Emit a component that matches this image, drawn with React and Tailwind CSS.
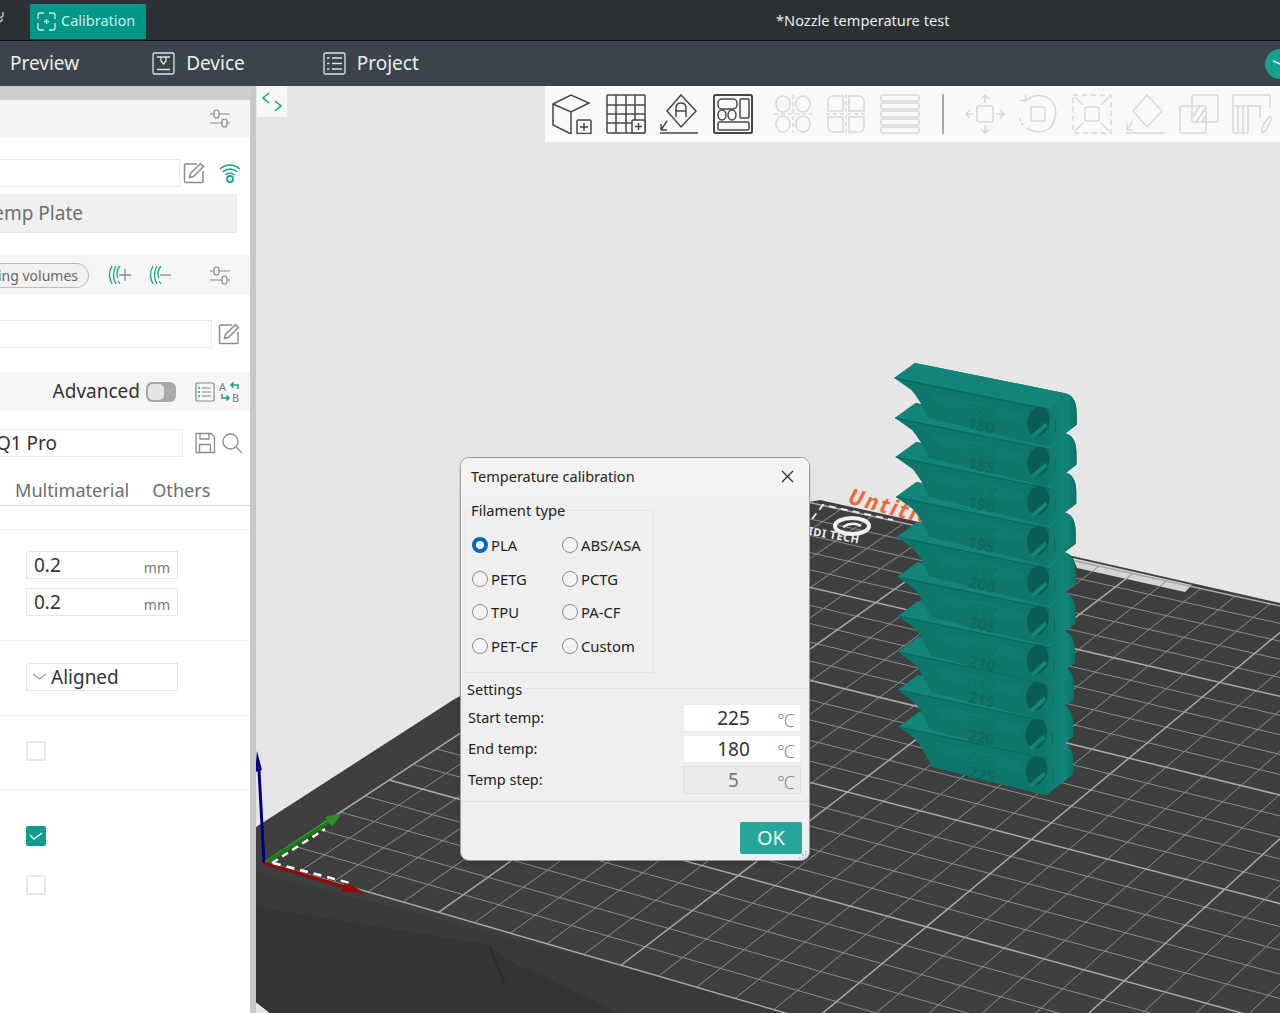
import React from 'react';

const SANS = { fontFamily: '"Noto Sans", "Open Sans", sans-serif' };

// perspective of the print bed: s runs along the front edge, t along the left edge
const OX = 265, OY = 862;
const G = -0.00494, H = 0.00721;
const VSX = -6585, VSY = -1125, VTX = 3832, VTY = -1492;
function project(s, t) {
  const d = 1 + G * s + H * t;
  return [(OX + G * s * VSX + H * t * VTX) / d, (OY + G * s * VSY + H * t * VTY) / d];
}

const TIP = [[894.3, 378], [895, 418], [895.7, 457], [896, 497], [897, 537], [897.5, 577], [898, 616], [898, 652], [898, 690], [899, 727]];
const LABELS = ['180', '185', '190', '195', '200', '205', '210', '215', '220', '225'];

function Tier({ x, y, k, label }) {
  return (
    <g transform={`translate(${x} ${y}) scale(${k} 1)`}>
      <path d="M0 0 L20.7 -15 L172 15.5 C180 18 182.4 26 182.4 36 L182.4 46.7 L153.7 68.4 L33.7 39.7 Q26 22 17 12 Z" fill="#0e766b" />
      <path d="M0 0 L20.7 -15 L172 15.5 L155.7 31.7 Z" fill="#12847a" />
      <path d="M0 0 L155.7 31.7" stroke="#0a655b" strokeWidth="1" fill="none" />
      <path d="M34 14 L130 34 L128 46 L46 28 Z" fill="#107c70" opacity="0.7" />
      <path d="M155.7 31.7 L172 15.5 C180 18 182.4 26 182.4 36 L182.4 46.7 L153.7 68.4 Z" fill="url(#cap)" />
      <ellipse cx="144" cy="43.4" rx="11" ry="15" transform="rotate(12 144 43.4)" fill="#0a5d54" />
      <path d="M138 59 L152.4 46.3" stroke="#128679" strokeWidth="4" fill="none" />
      <path d="M161 42 L161 54" stroke="#0c6a60" strokeWidth="1" fill="none" />
      <text transform="translate(70 32) rotate(13) skewX(-22)" fontSize="15" fontStyle="italic" fill="#0e7165" style={SANS}>orca</text>
      <text transform="translate(72 50) rotate(13)" fontSize="16" fontWeight="700" fill="#0c6c61" style={SANS}>{label}</text>
    </g>
  );
}

function Scene() {
  const minor = [];
  const major = [];
  for (let s = 0; s <= 45; s++) {
    const a = project(s, 0), b = project(s, 25);
    (s % 5 === 0 ? major : minor).push(`M${a[0]} ${a[1]}L${b[0]} ${b[1]}`);
  }
  for (let t = 0; t <= 25; t++) {
    const a = project(0, t), b = project(45, t);
    (t % 5 === 0 ? major : minor).push(`M${a[0]} ${a[1]}L${b[0]} ${b[1]}`);
  }
  return (
    <svg className="block w-full h-full" viewBox="256 86 1024 927">
      <defs>
        <clipPath id="bed"><path d="M256 827 L453 700 L809 502 L820 500 L1068 555 L1280 603 L1280 1013 L256 1013 Z" /></clipPath>
        <linearGradient id="cap" x1="0" y1="0" x2="1" y2="0">
          <stop offset="0" stopColor="#0f7a6e" />
          <stop offset="0.7" stopColor="#11857a" />
          <stop offset="1" stopColor="#0d7066" />
        </linearGradient>
      </defs>
      <path d="M256 827 L453 700 L809 502 L820 500 L1068 555 L1280 603 L1280 1013 L270 1013 L256 1002 Z" fill="#3e3f3f" />
      <path d="M256 872 L800 1013 L270 1013 L256 1002 Z" fill="#3a3a3a" />
      <path d="M256 907 L490 945 L507 960 L620 1013 L270 1013 L256 1002 Z" fill="#343434" />
      <path d="M490 947 L505 985" stroke="#2b2b2b" strokeWidth="2" fill="none" />
      <g clipPath="url(#bed)" fill="none">
        <path d="M1073 558 L1192 585 L1185 592 L1077 568 Z" fill="#d4d4d4" stroke="none" />
        <path d={minor.join('')} stroke="#8c8c8c" strokeWidth="1" />
        <path d={major.join('')} stroke="#a9a9a9" strokeWidth="1.5" />
        <path d="M812 519 L823 505 L893 520" stroke="#e8e8e8" strokeWidth="2" strokeDasharray="7 5" />
      </g>
      <text transform="translate(847 503) rotate(15)" fontSize="22" fontWeight="700" fontStyle="italic" letterSpacing="2" fill="#f0693a" style={SANS}>Untitled</text>
      <g fill="none" stroke="#f2f2f2">
        <ellipse cx="852" cy="526" rx="17" ry="8" strokeWidth="4" />
        <path d="M843 527 Q852 521 861 526" strokeWidth="2.5" />
      </g>
      <text transform="translate(799 533) rotate(10)" fontSize="11" fontWeight="700" letterSpacing="0.5" fill="#ededed" style={SANS}>QIDI TECH</text>

      {/* tower, bottom tier first */}
      {TIP.map((p, i) => 9 - i).map((i) => (
        <Tier key={i} x={TIP[i][0]} y={TIP[i][1]} k={1 - i * 0.005} label={LABELS[i]} />
      ))}

      {/* axes */}
      <path d="M264 863 L259 770" stroke="#00007f" strokeWidth="3" fill="none" />
      <path d="M257 751 L262 770 L255 772 Z" fill="#00007f" />
      <path d="M267 862 L330 821" stroke="#0a850a" strokeWidth="3.5" fill="none" />
      <path d="M342 813 L325 817 L332 827 Z" fill="#2f8a2f" />
      <path d="M272 863 L325 829" stroke="#ffffff" strokeWidth="2.5" strokeDasharray="7 5" fill="none" />
      <path d="M264 863 L345 887" stroke="#8b0f0f" strokeWidth="3.5" fill="none" />
      <path d="M365 893 L345 881 L341 892 Z" fill="#8b0f0f" />
      <path d="M273 863 L350 883" stroke="#ffffff" strokeWidth="2.5" strokeDasharray="8 6" fill="none" />
    </svg>
  );
}

function Sliders() {
  return (
    <svg width="22" height="22" viewBox="0 0 22 22" fill="none" stroke="#8a8a8a" strokeWidth="1.2">
      <path d="M1 7H5M10 7H21M1 16H13M18 16H21" />
      <rect x="5" y="3" width="5" height="8" rx="2.5" />
      <rect x="13" y="12" width="5" height="8" rx="2.5" />
    </svg>
  );
}

function EditIcon() {
  return (
    <svg width="22" height="22" viewBox="0 0 22 22" fill="none" stroke="#8c8c8c" strokeWidth="1.5">
      <path d="M14 2H2.5Q1.5 2 1.5 3V19.5Q1.5 20.5 2.5 20.5H19Q20 20.5 20 19.5V9" />
      <path d="M6.5 15.5L7.5 11.5L17.5 1.5L20.5 4.5L10.5 14.5Z" />
    </svg>
  );
}

function Wifi() {
  return (
    <svg width="22" height="22" viewBox="0 0 22 22" fill="none" stroke="#1aa08f" strokeWidth="1.4">
      <path d="M1 7Q11 -1 21 7M3.5 10Q11 4 18.5 10M6.5 13Q11 9 15.5 13" />
      <circle cx="11" cy="17" r="3" strokeWidth="1.8" />
    </svg>
  );
}

function Filament({ minus }) {
  return (
    <svg width="24" height="22" viewBox="0 0 24 22" fill="none" strokeWidth="1.3">
      <path d="M4 2Q-1 11 4 20M8 2Q3 11 8 20" stroke="#1aa08f" />
      <path d="M12 2Q7 8 10 14M10 17L12 20" stroke="#1aa08f" />
      <path d={minus ? 'M11 11H22' : 'M11 11H23M17 5V17'} stroke="#8a8a8a" />
    </svg>
  );
}

function ParamList() {
  return (
    <svg width="20" height="20" viewBox="0 0 20 20" fill="none" stroke="#7d8a88" strokeWidth="1.2">
      <rect x="1" y="1" width="18" height="18" rx="1" />
      <path d="M7 6H16M7 10H16M7 14H16" />
      <path d="M3 6H5M3 10H5M3 14H5" stroke="#1aa08f" strokeWidth="1.6" />
    </svg>
  );
}

function Compare() {
  return (
    <svg width="22" height="22" viewBox="0 0 22 22" fill="none">
      <text x="0" y="10" fontSize="11" fill="#7f7f7f" style={SANS}>A</text>
      <text x="13" y="21" fontSize="11" fill="#7f7f7f" style={SANS}>B</text>
      <path d="M19 8V4H12M14.5 1.5L12 4L14.5 6.5" stroke="#1aa08f" strokeWidth="1.6" />
      <path d="M3 13V17H10M7.5 14.5L10 17L7.5 19.5" stroke="#1aa08f" strokeWidth="1.6" />
    </svg>
  );
}

function SaveIcon() {
  return (
    <svg width="22" height="22" viewBox="0 0 22 22" fill="none" stroke="#8c8c8c" strokeWidth="1.3">
      <path d="M2 1.5H17L20.5 5V20.5H2Z" />
      <path d="M6 1.5V7H15V1.5M5.5 20.5V12.5H16.5V20.5" />
    </svg>
  );
}

function SearchIcon() {
  return (
    <svg width="22" height="22" viewBox="0 0 22 22" fill="none" stroke="#8c8c8c" strokeWidth="1.3">
      <circle cx="9.5" cy="9.5" r="7.5" />
      <path d="M15 15L21 21" />
    </svg>
  );
}

function NumberField({ value }) {
  return (
    <div className="w-[152px] h-[28px] ml-[26px] flex items-center justify-between pl-[7px] pr-[7px] border border-[#e6e6e6] bg-white">
      <span className="text-[19px] text-[#333]">{value}</span>
      <span className="text-[14px] text-[#777] mt-1">mm</span>
    </div>
  );
}

function Check({ on }) {
  if (on) {
    return (
      <div className="w-[20px] h-[20px] ml-[26px] rounded-[2px] bg-[#109c8a] flex items-center justify-center">
        <svg width="14" height="10" viewBox="0 0 14 10" fill="none" stroke="#e8fff9" strokeWidth="1.4"><path d="M1 4L5 8L13 2" /></svg>
      </div>
    );
  }
  return <div className="w-[20px] h-[20px] ml-[26px] rounded-[2px] border-2 border-[#e6e6e6] bg-white" />;
}

function Sidebar() {
  return (
    <div className="w-[250px] shrink-0 bg-white flex flex-col overflow-hidden" style={SANS}>
      <div className="h-[14px] bg-[#cfcfcf] shrink-0" />
      <div className="h-[38px] shrink-0 bg-[#f5f5f5] flex items-center justify-end pr-[19px] pb-[2px]"><Sliders /></div>

      <div className="h-[28px] mt-[21px] shrink-0 flex items-center">
        <div className="w-[180px] h-full border-y border-r border-[#ececec]" />
        <div className="ml-[3px]"><EditIcon /></div>
        <div className="ml-[14px]"><Wifi /></div>
      </div>
      <div className="w-[237px] h-[39px] mt-[7px] shrink-0 bg-[#efefef] border-b border-r border-[#e6e6e6] flex items-center justify-end pr-[153px] overflow-hidden whitespace-nowrap text-[19px] text-[#6e6e6e]">Low Temp Plate</div>

      <div className="h-[40px] mt-[22px] shrink-0 bg-[#f6f6f6] flex items-center">
        <div className="w-[89px] h-[25px] rounded-r-full border border-l-0 border-[#bdbdbd] bg-[#f1f1f1] flex items-center justify-end pr-[10px] overflow-hidden whitespace-nowrap text-[14px] text-[#666]">Flushing volumes</div>
        <div className="ml-[19px]"><Filament /></div>
        <div className="ml-[17px]"><Filament minus /></div>
        <div className="ml-[36px]"><Sliders /></div>
      </div>

      <div className="h-[28px] mt-[25px] shrink-0 flex items-center">
        <div className="w-[212px] h-full border-y border-r border-[#ececec]" />
        <div className="ml-[6px]"><EditIcon /></div>
      </div>

      <div className="h-[39px] mt-[24px] shrink-0 bg-[#f6f6f6] flex items-center justify-end">
        <span className="text-[19px] text-[#333]">Advanced</span>
        <div className="ml-[6px] w-[30px] h-[20px] rounded-[6px] bg-[#a9a9a9] p-[2px] pr-[12px]"><div className="w-full h-full rounded-[5px] bg-[#e4e4e4]" /></div>
        <div className="ml-[19px]"><ParamList /></div>
        <div className="ml-[4px] mr-[9px]"><Compare /></div>
      </div>

      <div className="h-[28px] mt-[18px] shrink-0 flex items-center">
        <div className="w-[183px] h-full border-y border-r border-[#ececec] flex items-center justify-end pr-[125px] overflow-hidden whitespace-nowrap text-[19px] text-[#333]">Qidi Q1 Pro</div>
        <div className="ml-[11px]"><SaveIcon /></div>
        <div className="ml-[5px]"><SearchIcon /></div>
      </div>

      <div className="h-[49px] shrink-0 border-b border-[#d6d6d6] flex items-end pb-[1px] text-[18.1px] text-[#6e6e6e]">
        <span className="ml-[15px]">Multimaterial</span>
        <span className="ml-[23px]">Others</span>
      </div>

      <div className="h-[24px] shrink-0 border-b border-[#f2f2f2]" />
      <div className="h-[111px] shrink-0 pt-[21px] border-b border-[#f2f2f2] flex flex-col gap-[9px]">
        <NumberField value="0.2" />
        <NumberField value="0.2" />
      </div>
      <div className="h-[75px] shrink-0 pt-[22px] border-b border-[#f2f2f2]">
        <div className="w-[152px] h-[28px] ml-[26px] flex items-center pl-[5px] border border-[#e6e6e6] text-[19px] text-[#333]">
          <svg width="15" height="8" viewBox="0 0 15 8" fill="none" stroke="#999" strokeWidth="1.2"><path d="M1 1L7.5 6L14 1" /></svg>
          <span className="ml-[4px]">Aligned</span>
        </div>
      </div>
      <div className="h-[74px] shrink-0 pt-[25px] border-b border-[#f2f2f2]"><Check /></div>
      <div className="pt-[36px] flex flex-col gap-[29px]">
        <Check on />
        <Check />
      </div>
    </div>
  );
}

function TopBars() {
  return (
    <div className="shrink-0 text-[#e9eeee]" style={SANS}>
      <div className="h-[41px] bg-[#2b3134] border-b border-[#0f1112] relative flex items-center">
        <svg width="4" height="16" viewBox="0 0 4 16" fill="none" stroke="#e6e6e6" strokeWidth="1.2" className="shrink-0 mb-[5px]"><path d="M0 8L3 6V2M3 9L0 12" /></svg>
        <div className="ml-[26px] mt-[2px] w-[116px] h-[35px] bg-[#009688] flex items-center pl-[7px] gap-[5px] text-[14.5px] text-[#c9efe9]">
          <svg width="19" height="19" viewBox="0 0 19 19" fill="none" stroke="#c9efe9" strokeWidth="1.3">
            <path d="M7 1H3Q1 1 1 3V7M12 1H16Q18 1 18 3V7M1 11V16Q1 18 3 18H7M18 11V16Q18 18 16 18H12" />
            <path d="M9.5 7V12M7 9.5H12" />
          </svg>
          Calibration
        </div>
        <span className="absolute left-[776px] top-[10px] text-[14.6px] text-[#ececec]">*Nozzle temperature test</span>
      </div>
      <div className="h-[45px] bg-[#3b4448] flex items-center text-[19px] overflow-hidden">
        <span className="ml-[10px]">Preview</span>
        <svg className="ml-[73px]" width="23" height="23" viewBox="0 0 23 23" fill="none" stroke="#e0e4e4" strokeWidth="1.3">
          <rect x="1" y="1" width="21" height="21" rx="1.5" />
          <path d="M5 5H18M5 17.5H18" />
          <path d="M9 5V9L11.5 12L14 9V5" />
        </svg>
        <span className="ml-[11px]">Device</span>
        <svg className="ml-[78px]" width="23" height="23" viewBox="0 0 23 23" fill="none" stroke="#e0e4e4" strokeWidth="1.3">
          <rect x="1" y="1" width="21" height="21" rx="1.5" />
          <path d="M9 6H19M9 11.5H19M9 17H19M4 6H6.5M4 11.5H6.5M4 17H6.5" />
        </svg>
        <span className="ml-[11px]">Project</span>
        <div className="ml-auto mr-[-15px] w-[30px] h-[30px] shrink-0 rounded-full bg-[#16a08e] flex items-center justify-center">
          <svg width="14" height="8" viewBox="0 0 14 8" fill="none" stroke="#ffffff" strokeWidth="1.6"><path d="M0 1L14 7" /></svg>
        </div>
      </div>
    </div>
  );
}

function ToolIcon({ children, off }) {
  return (
    <svg width="40" height="40" viewBox="0 0 40 40" fill="none" stroke={off ? '#d8d8d8' : '#474747'} strokeWidth="1.5" className="shrink-0">
      {children}
    </svg>
  );
}

function Toolbar() {
  return (
    <div className="absolute right-0 top-0 w-[735px] h-[56px] bg-[#f9f9f9] flex items-center pl-[7px]">
      <div className="flex gap-[13.5px]">
        <ToolIcon>
          <path d="M1 10L19 1L37 9L19 18ZM1 10V31L19 40M19 18V40" />
          <rect x="25" y="26" width="14" height="13.5" rx="1" fill="#f9f9f9" />
          <path d="M32 29V37M28 33H36" />
        </ToolIcon>
        <ToolIcon>
          <rect x="1" y="1" width="38" height="38" rx="1" />
          <path d="M10 1V39M20 1V39M29 1V26M1 11H39M1 20H39M1 29H26" />
          <rect x="26" y="26" width="13" height="13" rx="1" fill="#f9f9f9" />
          <path d="M32.5 29V36M29 32.5H36" />
        </ToolIcon>
        <ToolIcon>
          <path d="M22 1L37 17L22 33L8 17Z" />
          <path d="M1 39H39M2 36L8 27M2 36V30M2 36L8 36" />
          <path d="M17 23V14Q17 9 22 9Q27 9 27 14V23M17 17H27" />
        </ToolIcon>
        <ToolIcon>
          <rect x="1" y="1" width="38" height="38" rx="1.5" strokeWidth="2" />
          <rect x="5" y="5" width="19" height="10" rx="4" />
          <rect x="27" y="5" width="9" height="19" rx="1" />
          <ellipse cx="9" cy="21" rx="4" ry="5" />
          <ellipse cx="19" cy="21" rx="4" ry="5" />
          <rect x="5" y="28" width="31" height="8" rx="1.5" />
        </ToolIcon>
      </div>
      <div className="flex gap-[13.5px] ml-[20px]">
        <ToolIcon off>
          <ellipse cx="10" cy="10" rx="7" ry="8" /><ellipse cx="30" cy="10" rx="7" ry="8" />
          <ellipse cx="10" cy="30" rx="7" ry="8" /><ellipse cx="30" cy="30" rx="7" ry="8" />
          <path d="M20 1V39M1 20H39" strokeDasharray="4 3" />
        </ToolIcon>
        <ToolIcon off>
          <path d="M17 2H8Q2 2 2 8V17H17ZM23 2H32Q38 2 38 8V17H23ZM17 38H8Q2 38 2 32V23H17ZM23 38H32Q38 38 38 32V23H23Z" />
          <path d="M20 0V40M0 20H40" strokeDasharray="4 3" />
        </ToolIcon>
        <ToolIcon off>
          <rect x="1" y="1" width="38" height="6" rx="1.5" />
          <rect x="1" y="9" width="38" height="6" rx="1.5" />
          <rect x="1" y="17" width="38" height="6" rx="1.5" />
          <rect x="1" y="25" width="38" height="6" rx="1.5" />
          <rect x="1" y="33" width="38" height="6" rx="1.5" />
        </ToolIcon>
      </div>
      <div className="w-[2px] h-[40px] bg-[#a8a8a8] ml-[22px]" />
      <div className="flex gap-[13.5px] ml-[21px]">
        <ToolIcon off>
          <rect x="12" y="12" width="16" height="16" rx="1.5" />
          <path d="M20 9V1M16 5L20 1L24 5M20 31V39M16 35L20 39L24 35M9 20H1M5 16L1 20L5 24M31 20H39M35 16L39 20L35 24" />
        </ToolIcon>
        <ToolIcon off>
          <rect x="13" y="13" width="14" height="14" rx="1.5" />
          <path d="M7 7Q20 -3 32 5Q43 16 33 33Q22 42 9 34" />
          <path d="M2 24Q3 30 7 33" strokeDasharray="3 2" />
          <path d="M2 6L7 7L8 1" />
        </ToolIcon>
        <ToolIcon off>
          <rect x="1" y="1" width="38" height="38" strokeDasharray="5 4" />
          <rect x="13" y="13" width="14" height="14" rx="1.5" />
          <path d="M3 3L11 11M37 3L29 11M3 37L11 29M37 37L29 29" />
        </ToolIcon>
        <ToolIcon off>
          <path d="M22 1L37 17L22 33L8 17Z" />
          <path d="M1 39H39M2 36L8 27M2 36V30M2 36L8 36" />
        </ToolIcon>
        <ToolIcon off>
          <rect x="13" y="1" width="26" height="27" rx="1" />
          <rect x="1" y="12" width="26" height="27" rx="1" />
          <path d="M13 24L21 12M17 28L27 14M23 28L27 22" strokeWidth="2" />
        </ToolIcon>
        <ToolIcon off>
          <path d="M1 39V1H38V14" />
          <path d="M1 12H28V24" />
          <path d="M6 12V39M11 12V39M16 12V39M1 39H16" />
          <path d="M30 39Q29 33 33 28L38 22L40 24L36 32Q34 38 30 39Z" />
        </ToolIcon>
      </div>
    </div>
  );
}

const FILAMENTS = [['PLA', 'ABS/ASA'], ['PETG', 'PCTG'], ['TPU', 'PA-CF'], ['PET-CF', 'Custom']];

function Radio({ label, on }) {
  return (
    <div className="flex items-center gap-[3px] w-[90px]">
      {on
        ? <span className="w-[16px] h-[16px] rounded-full border-[4px] border-[#0067c0] bg-white shrink-0" />
        : <span className="w-[16px] h-[16px] rounded-full border border-[#8a8a8a] bg-[#f3f3f3] shrink-0" />}
      <span className="text-[14.8px] text-[#222]">{label}</span>
    </div>
  );
}

function TempRow({ label, value, disabled }) {
  return (
    <div className="flex items-center justify-between pl-[3px]">
      <span className="text-[14.5px] text-[#222]">{label}</span>
      <div className={`w-[118px] h-[28px] border flex items-center ${disabled ? 'bg-[#ebebeb] border-[#e0e0e0] text-[#777]' : 'bg-white border-[#ececec] text-[#333]'}`}>
        <span className="w-[99px] text-center text-[19px]">{value}</span>
        <span className="text-[18px] font-light text-[#888] mt-1 -ml-[6px]">℃</span>
      </div>
    </div>
  );
}

function Dialog() {
  return (
    <div className="absolute left-[204px] top-[371px] w-[350px] h-[404px] rounded-[9px] bg-[#efefef] border border-[#9a9a9a] shadow-md overflow-hidden flex flex-col" style={SANS}>
      <div className="h-[37px] shrink-0 bg-[#f3f3f3] flex items-center justify-between pl-[10px] pr-[15px]">
        <span className="text-[14.5px] text-[#222]">Temperature calibration</span>
        <svg width="13" height="13" viewBox="0 0 13 13" fill="none" stroke="#333" strokeWidth="1.3"><path d="M1 1L12 12M12 1L1 12" /></svg>
      </div>
      <div className="relative ml-[4px] mt-[15px] w-[189px] h-[163px] shrink-0 border border-[#e3e3e3] pl-[6px] pt-[24px] flex flex-col gap-[13px]">
        <span className="absolute left-[5px] top-[-11px] bg-[#efefef] pr-[2px] text-[14.8px] leading-[20px] text-[#222]">Filament type</span>
        {FILAMENTS.map((row, i) => (
          <div key={row[0]} className="flex h-[20.5px]">
            <Radio label={row[0]} on={i === 0} />
            <Radio label={row[1]} />
          </div>
        ))}
      </div>
      <div className="relative mt-[15px] ml-[4px] shrink-0 border-t border-[#e0e0e0] pt-[15px] pr-[8px] flex flex-col gap-[3px]">
        <span className="absolute left-[2px] top-[-10px] bg-[#efefef] pr-[2px] text-[14.5px] leading-[20px] text-[#222]">Settings</span>
        <TempRow label="Start temp:" value="225" />
        <TempRow label="End temp:" value="180" />
        <TempRow label="Temp step:" value="5" disabled />
      </div>
      <div className="mt-[7px] shrink-0 border-t border-[#e0e0e0] flex justify-end pt-[20px] pr-[7px]">
        <div className="w-[62px] h-[32px] rounded-[2px] bg-[#26a69a] flex items-center justify-center text-[20px] text-[#eefaf8]">OK</div>
      </div>
      <svg className="absolute right-[2px] bottom-[1px]" width="8" height="8" viewBox="0 0 8 8" fill="#b5b5b5">
        <rect x="6" y="0" width="1.5" height="1.5" /><rect x="3" y="3" width="1.5" height="1.5" /><rect x="6" y="3" width="1.5" height="1.5" />
        <rect x="0" y="6" width="1.5" height="1.5" /><rect x="3" y="6" width="1.5" height="1.5" /><rect x="6" y="6" width="1.5" height="1.5" />
      </svg>
    </div>
  );
}

export default function App() {
  return (
    <div className="w-[1280px] h-[1013px] flex flex-col overflow-hidden bg-[#e6e6e6]">
      <TopBars />
      <div className="flex-1 flex min-h-0">
        <Sidebar />
        <div className="w-[6px] shrink-0 bg-[#c8c8c8]" />
        <div className="flex-1 relative min-w-0">
          <Scene />
          <div className="absolute left-[1px] top-0 w-[30px] h-[31px] bg-[#f6f6f6] flex items-center justify-center">
            <svg width="20" height="22" viewBox="0 0 20 22" fill="none" stroke="#1aa08f" strokeWidth="1.6"><path d="M7 2L1 7L7 12M13 10L19 15L13 20" /></svg>
          </div>
          <Toolbar />
          <Dialog />
        </div>
      </div>
    </div>
  );
}
